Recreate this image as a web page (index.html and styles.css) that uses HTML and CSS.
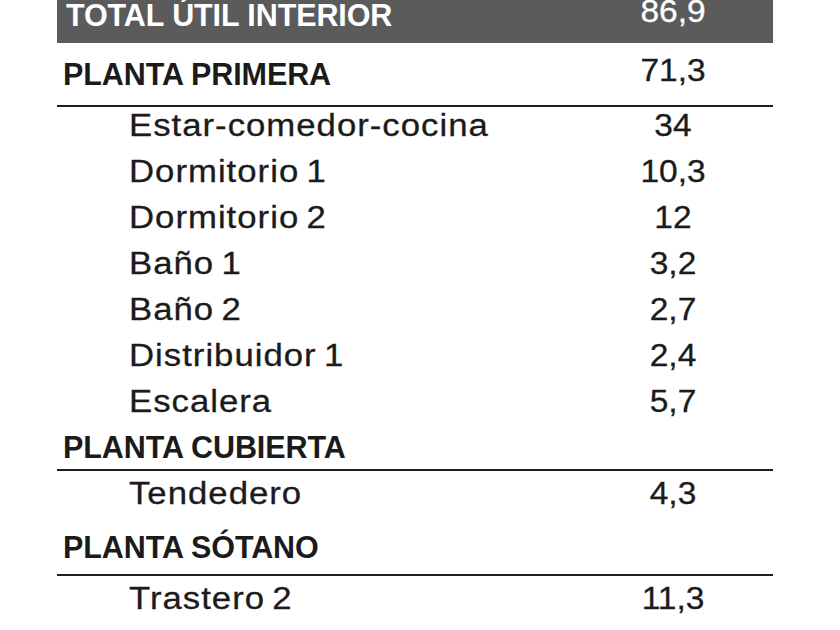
FILE: index.html
```html
<!DOCTYPE html>
<html lang="es">
<head>
<meta charset="utf-8">
<title>Superficies útiles</title>
<link rel="stylesheet" href="styles.css">
</head>
<body>
<div class="table">
  <div class="row total">
    <span class="label">TOTAL ÚTIL INTERIOR</span>
    <span class="value">86,9</span>
  </div>
  <div class="row section s1">
    <span class="label">PLANTA PRIMERA</span>
    <span class="value">71,3</span>
  </div>
  <div class="items first">
    <div class="row item"><span class="label">Estar-comedor-cocina</span><span class="value">34</span></div>
    <div class="row item"><span class="label">Dormitorio 1</span><span class="value">10,3</span></div>
    <div class="row item"><span class="label">Dormitorio 2</span><span class="value">12</span></div>
    <div class="row item"><span class="label">Baño 1</span><span class="value">3,2</span></div>
    <div class="row item"><span class="label">Baño 2</span><span class="value">2,7</span></div>
    <div class="row item"><span class="label">Distribuidor 1</span><span class="value">2,4</span></div>
    <div class="row item"><span class="label">Escalera</span><span class="value">5,7</span></div>
  </div>
  <div class="row section s2">
    <span class="label">PLANTA CUBIERTA</span>
    <span class="value"></span>
  </div>
  <div class="row item"><span class="label">Tendedero</span><span class="value">4,3</span></div>
  <div class="row section s3">
    <span class="label">PLANTA SÓTANO</span>
    <span class="value"></span>
  </div>
  <div class="row item"><span class="label">Trastero 2</span><span class="value">11,3</span></div>
</div>
</body>
</html>
```

FILE: styles.css
```css
html, body {
  margin: 0;
  padding: 0;
  background: #ffffff;
}

body {
  font-family: "Liberation Sans", Arial, sans-serif;
  color: #1b1b1b;
  overflow: hidden;
}

.table {
  width: 716px;
  margin: -8px 0 0 57px;
}

.row {
  display: flex;
  font-size: 31px;
  line-height: 46px;
}

.label {
  flex: 1;
  white-space: nowrap;
}

.value {
  width: 200px;
  text-align: center;
  font-weight: 400;
  font-size: 31px;
  transform: scaleX(1.08);
  transform-origin: center;
  -webkit-text-stroke: 0.3px currentColor;
}

.total {
  background: #5b5b5b;
  color: #ffffff;
  padding-bottom: 5px;
}

.total .label {
  font-weight: 700;
  font-size: 30.5px;
  padding-left: 9px;
  letter-spacing: -0.1px;
}

.total .value,
.section .value {
  line-height: 40px;
}

.section .label {
  font-weight: 700;
  font-size: 30.5px;
  padding-left: 6px;
  letter-spacing: -0.1px;
}

.section {
  border-bottom: 2px solid #1e1e1e;
}

.s1 {
  padding: 8px 0 8px;
}

.s2 {
  line-height: 44px;
}

.s3 {
  padding: 7px 0 4px;
}

.items.first {
  margin-top: -4px;
}

.item {
  padding-left: 72px;
}

.item .label {
  letter-spacing: 0.9px;
  word-spacing: -3px;
  transform: scaleX(1.12);
  transform-origin: left center;
  -webkit-text-stroke: 0.3px currentColor;
}
```
